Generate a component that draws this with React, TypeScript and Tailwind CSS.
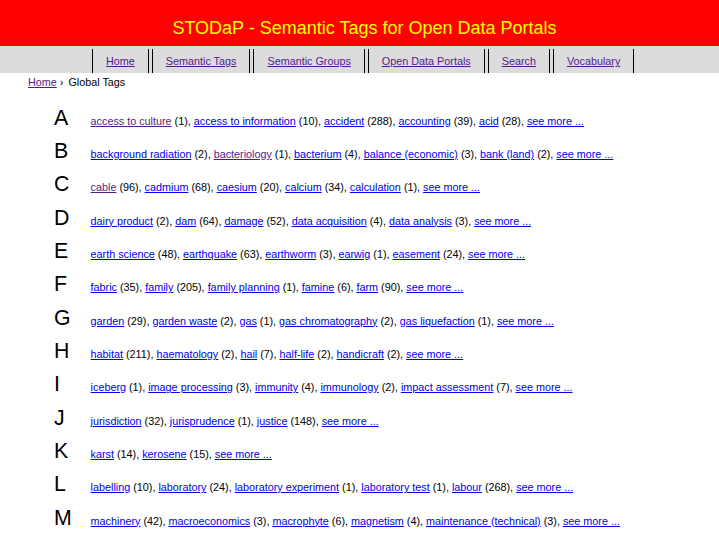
import React from "react";

type Tag = { name: string; count: number; visited?: boolean };

const rows: { letter: string; tags: Tag[] }[] = [
  { letter: "A", tags: [
    { name: "access to culture", count: 1, visited: true },
    { name: "access to information", count: 10 },
    { name: "accident", count: 288 },
    { name: "accounting", count: 39 },
    { name: "acid", count: 28 },
  ] },
  { letter: "B", tags: [
    { name: "background radiation", count: 2 },
    { name: "bacteriology", count: 1, visited: true },
    { name: "bacterium", count: 4 },
    { name: "balance (economic)", count: 3 },
    { name: "bank (land)", count: 2 },
  ] },
  { letter: "C", tags: [
    { name: "cable", count: 96, visited: true },
    { name: "cadmium", count: 68 },
    { name: "caesium", count: 20 },
    { name: "calcium", count: 34 },
    { name: "calculation", count: 1 },
  ] },
  { letter: "D", tags: [
    { name: "dairy product", count: 2 },
    { name: "dam", count: 64 },
    { name: "damage", count: 52 },
    { name: "data acquisition", count: 4 },
    { name: "data analysis", count: 3 },
  ] },
  { letter: "E", tags: [
    { name: "earth science", count: 48 },
    { name: "earthquake", count: 63 },
    { name: "earthworm", count: 3 },
    { name: "earwig", count: 1 },
    { name: "easement", count: 24 },
  ] },
  { letter: "F", tags: [
    { name: "fabric", count: 35 },
    { name: "family", count: 205 },
    { name: "family planning", count: 1 },
    { name: "famine", count: 6 },
    { name: "farm", count: 90 },
  ] },
  { letter: "G", tags: [
    { name: "garden", count: 29 },
    { name: "garden waste", count: 2 },
    { name: "gas", count: 1 },
    { name: "gas chromatography", count: 2 },
    { name: "gas liquefaction", count: 1 },
  ] },
  { letter: "H", tags: [
    { name: "habitat", count: 211 },
    { name: "haematology", count: 2 },
    { name: "hail", count: 7 },
    { name: "half-life", count: 2 },
    { name: "handicraft", count: 2 },
  ] },
  { letter: "I", tags: [
    { name: "iceberg", count: 1 },
    { name: "image processing", count: 3 },
    { name: "immunity", count: 4 },
    { name: "immunology", count: 2 },
    { name: "impact assessment", count: 7 },
  ] },
  { letter: "J", tags: [
    { name: "jurisdiction", count: 32 },
    { name: "jurisprudence", count: 1 },
    { name: "justice", count: 148 },
  ] },
  { letter: "K", tags: [
    { name: "karst", count: 14 },
    { name: "kerosene", count: 15 },
  ] },
  { letter: "L", tags: [
    { name: "labelling", count: 10 },
    { name: "laboratory", count: 24 },
    { name: "laboratory experiment", count: 1 },
    { name: "laboratory test", count: 1 },
    { name: "labour", count: 268 },
  ] },
  { letter: "M", tags: [
    { name: "machinery", count: 42 },
    { name: "macroeconomics", count: 3 },
    { name: "macrophyte", count: 6 },
    { name: "magnetism", count: 4 },
    { name: "maintenance (technical)", count: 3 },
  ] },
];

const navItems = ["Home", "Semantic Tags", "Semantic Groups", "Open Data Portals", "Search", "Vocabulary"];

export default function App() {
  return (
    <div className="font-['Liberation_Sans',Arial,sans-serif] text-black bg-white min-h-[533px]">
      <header className="h-[46px] bg-[#ff0000] pt-[19px] pl-[10px] text-center">
        <h1 className="text-[18px] leading-[18px] text-[#ffff00] font-normal">
          STODaP - Semantic Tags for Open Data Portals
        </h1>
      </header>
      <nav className="h-[27px] bg-[#dcdcdc] pt-[3px] pl-[92px] flex gap-[3px]">
        {navItems.map((item) => (
          <div
            key={item}
            className="h-[24px] shrink-0 border-x border-black px-[13px] pt-[6px] text-[10.8px] leading-[12px]"
          >
            <a href="#" className="underline text-[#551a8b]">{item}</a>
          </div>
        ))}
      </nav>
      <div className="pl-[28px] pt-[3px] text-[10.8px] leading-[12px]">
        <a href="#" className="underline text-[#551a8b]">Home</a>
        <span> › </span>
        <span className="ml-[2px]">Global Tags</span>
      </div>
      <div className="mt-[19.6px] pl-[54px]">
        {rows.map((row) => (
          <div key={row.letter} className="flex items-baseline h-[33.33px]">
            <div className="w-[36.6px] shrink-0 text-[21.33px] leading-none">{row.letter}</div>
            <div className="text-[10.8px] leading-[12px] whitespace-nowrap">
              {row.tags.map((t) => (
                <React.Fragment key={t.name}>
                  <a
                    href="#"
                    className={t.visited ? "underline text-[#551a8b]" : "underline text-[#0000ee]"}
                  >
                    {t.name}
                  </a>
                  {` (${t.count}), `}
                </React.Fragment>
              ))}
              <a href="#" className="underline text-[#0000ee]">see more ...</a>
            </div>
          </div>
        ))}
      </div>
    </div>
  );
}
